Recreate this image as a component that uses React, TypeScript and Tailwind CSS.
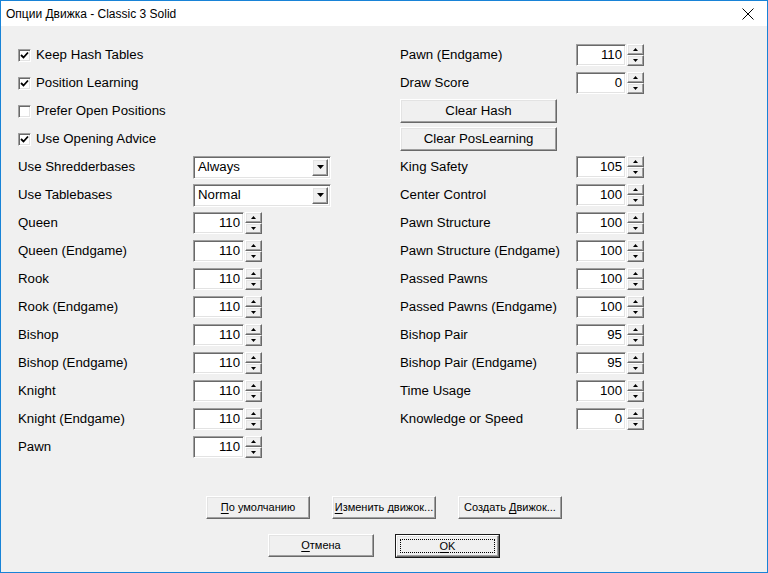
import React from 'react';

const FONT = { fontFamily: '"Liberation Sans", Arial, sans-serif' };

const raised =
  'border border-t-white border-l-white border-r-[#696969] border-b-[#696969] shadow-[inset_-1px_-1px_0_#a0a0a0,inset_1px_1px_0_#e3e3e3] bg-[#f0f0f0]';
const sunken =
  'border border-t-[#a0a0a0] border-l-[#a0a0a0] border-b-white border-r-white shadow-[inset_1px_1px_0_#696969,inset_-1px_-1px_0_#e3e3e3] bg-white';

const Row: React.FC<{ children: React.ReactNode }> = ({ children }) => (
  <div className="h-[28px] flex items-center">{children}</div>
);

const Check: React.FC<{ label: string; checked?: boolean }> = ({ label, checked }) => (
  <Row>
    <div className={`w-[13px] h-[13px] flex items-center justify-center ${sunken}`}>
      {checked && (
        <svg width="9" height="9" viewBox="0 0 9 9">
          <path d="M1 4 L3.5 6.5 L8 1.5" stroke="#000" strokeWidth="1.8" fill="none" />
        </svg>
      )}
    </div>
    <span className="ml-[5px]">{label}</span>
  </Row>
);

const Tri: React.FC<{ up?: boolean; size?: number }> = ({ up, size = 5 }) => (
  <svg width={size + 2} height={Math.ceil(size / 2) + 1} viewBox={`0 0 ${size + 2} ${Math.ceil(size / 2) + 1}`}>
    {up ? (
      <path d={`M1 ${Math.ceil(size / 2)} L${(size + 2) / 2} 0 L${size + 1} ${Math.ceil(size / 2)} Z`} fill="#000" />
    ) : (
      <path d={`M1 0 L${size + 1} 0 L${(size + 2) / 2} ${Math.ceil(size / 2)} Z`} fill="#000" />
    )}
  </svg>
);

const Spin: React.FC<{ value: string; w?: string }> = ({ value, w = 'w-[51px]' }) => (
  <div className="flex items-center h-[22px]">
    <div className={`${w} h-[22px] ${sunken} flex items-center justify-end pr-[3px]`}>{value}</div>
    <div className="ml-[1px] w-[17px] h-[22px] flex flex-col">
      <div className={`h-[11px] flex items-center justify-center ${raised}`}>
        <Tri up />
      </div>
      <div className={`h-[11px] flex items-center justify-center ${raised}`}>
        <Tri />
      </div>
    </div>
  </div>
);

const Combo: React.FC<{ value: string }> = ({ value }) => (
  <div className={`w-[138px] h-[23px] ${sunken} flex items-center p-[2px]`}>
    <span className="flex-1 pl-[2px]">{value}</span>
    <div className={`w-[16px] h-full flex items-center justify-center ${raised}`}>
      <Tri size={7} />
    </div>
  </div>
);

const LabelRow: React.FC<{ label: string; labelW: string; children: React.ReactNode }> = ({ label, labelW, children }) => (
  <Row>
    <span className={labelW}>{label}</span>
    {children}
  </Row>
);

const Btn: React.FC<{ w: string; children: React.ReactNode; def?: boolean }> = ({ w, children, def }) =>
  def ? (
    <div className={`${w} h-[24px] border border-[#1a1a1a] flex`}>
      <div className={`flex-1 ${raised} flex items-center justify-center p-[3px]`}>
        <div className="w-full h-full border border-dotted border-black flex items-center justify-center">
          <span>{children}</span>
        </div>
      </div>
    </div>
  ) : (
    <div className={`${w} h-[23px] ${raised} flex items-center justify-center whitespace-nowrap`}>
      <span>{children}</span>
    </div>
  );

const U: React.FC<{ children: React.ReactNode }> = ({ children }) => <span className="underline underline-offset-2">{children}</span>;

export default function App() {
  const leftSpins = ['Queen', 'Queen (Endgame)', 'Rook', 'Rook (Endgame)', 'Bishop', 'Bishop (Endgame)', 'Knight', 'Knight (Endgame)', 'Pawn'];
  const rightSpins: [string, string][] = [
    ['King Safety', '105'],
    ['Center Control', '100'],
    ['Pawn Structure', '100'],
    ['Pawn Structure (Endgame)', '100'],
    ['Passed Pawns', '100'],
    ['Passed Pawns (Endgame)', '100'],
    ['Bishop Pair', '95'],
    ['Bishop Pair (Endgame)', '95'],
    ['Time Usage', '100'],
    ['Knowledge or Speed', '0'],
  ];

  return (
    <div style={FONT} className="w-[768px] h-[573px] border border-[#1883d7] flex flex-col text-black bg-[#f0f0f0] overflow-hidden">
      {/* title bar */}
      <div className="h-[25px] bg-white flex items-center justify-between pl-[5px] pr-[13px] text-[12px]">
        <span>Опции Движка - Classic 3 Solid</span>
        <svg width="12" height="12" viewBox="0 0 12 12">
          <path d="M0.5 0.5 L11.5 11.5 M11.5 0.5 L0.5 11.5" stroke="#000" strokeWidth="1" />
        </svg>
      </div>

      <div className="flex-1 flex flex-col pt-[15px] text-[13.25px]">
        <div className="flex pl-[17px]">
          <div className="w-[382px] flex flex-col">
            <Check label="Keep Hash Tables" checked />
            <Check label="Position Learning" checked />
            <Check label="Prefer Open Positions" />
            <Check label="Use Opening Advice" checked />
            <LabelRow label="Use Shredderbases" labelW="w-[175px]">
              <Combo value="Always" />
            </LabelRow>
            <LabelRow label="Use Tablebases" labelW="w-[175px]">
              <Combo value="Normal" />
            </LabelRow>
            {leftSpins.map((l) => (
              <LabelRow key={l} label={l} labelW="w-[175px]">
                <Spin value="110" />
              </LabelRow>
            ))}
          </div>

          <div className="flex flex-col">
            <LabelRow label="Pawn (Endgame)" labelW="w-[176px]">
              <Spin value="110" w="w-[50px]" />
            </LabelRow>
            <LabelRow label="Draw Score" labelW="w-[176px]">
              <Spin value="0" w="w-[50px]" />
            </LabelRow>
            <Row>
              <div className={`w-[157px] h-[24px] ${raised} flex items-center justify-center`}>Clear Hash</div>
            </Row>
            <Row>
              <div className={`w-[157px] h-[24px] ${raised} flex items-center justify-center`}>Clear PosLearning</div>
            </Row>
            {rightSpins.map(([l, v]) => (
              <LabelRow key={l} label={l} labelW="w-[176px]">
                <Spin value={v} w="w-[50px]" />
              </LabelRow>
            ))}
          </div>
        </div>

        <div className="mt-[35px] flex justify-center gap-[22px] text-[11px]">
          <Btn w="w-[104px]">
            <U>П</U>о умолчанию
          </Btn>
          <Btn w="w-[104px]">
            <U>И</U>зменить движок...
          </Btn>
          <Btn w="w-[104px]">
            Создать <U>Д</U>вижок...
          </Btn>
        </div>
        <div className="mt-[15px] flex justify-center gap-[21px] text-[11px]">
          <Btn w="w-[106px]">
            <U>О</U>тмена
          </Btn>
          <Btn w="w-[105px]" def>
            <U>O</U>K
          </Btn>
        </div>
      </div>
    </div>
  );
}
